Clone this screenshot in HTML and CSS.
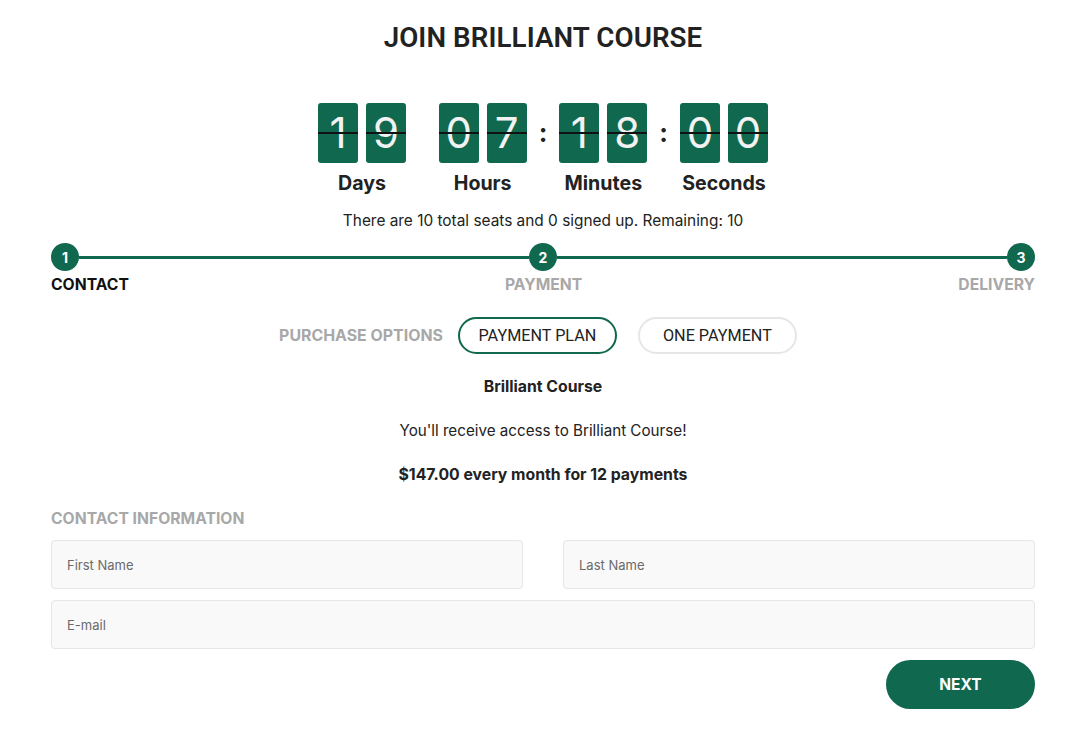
FILE: index.html
```html
<!DOCTYPE html>
<html>
<head>
<meta charset="utf-8">
<link rel="stylesheet" href="styles.css">
</head>
<body>
<div class="page">
  <h1 class="title">JOIN BRILLIANT COURSE</h1>

  <div class="countdown">
    <div class="unit">
      <div class="digits"><span class="card">1</span><span class="card">9</span></div>
      <div class="label">Days</div>
    </div>
    <div class="sep"></div>
    <div class="unit">
      <div class="digits"><span class="card">0</span><span class="card">7</span></div>
      <div class="label">Hours</div>
    </div>
    <div class="sep">:</div>
    <div class="unit">
      <div class="digits"><span class="card">1</span><span class="card">8</span></div>
      <div class="label">Minutes</div>
    </div>
    <div class="sep">:</div>
    <div class="unit">
      <div class="digits"><span class="card">0</span><span class="card">0</span></div>
      <div class="label">Seconds</div>
    </div>
  </div>

  <p class="seats">There are 10 total seats and 0 signed up. Remaining: 10</p>

  <div class="steps">
    <div class="track">
      <span class="dot">1</span>
      <span class="line"></span>
      <span class="dot">2</span>
      <span class="line"></span>
      <span class="dot">3</span>
    </div>
    <div class="step-labels">
      <span class="step active">CONTACT</span>
      <span class="step">PAYMENT</span>
      <span class="step">DELIVERY</span>
    </div>
  </div>

  <div class="options">
    <span class="options-label">PURCHASE OPTIONS</span>
    <button class="opt selected">PAYMENT PLAN</button>
    <button class="opt last">ONE PAYMENT</button>
  </div>

  <p class="product">Brilliant Course</p>
  <p class="desc">You'll receive access to Brilliant Course!</p>
  <p class="price">$147.00 every month for 12 payments</p>

  <div class="section-label">CONTACT INFORMATION</div>
  <div class="form">
    <div class="row">
      <input class="field" type="text" placeholder="First Name">
      <input class="field" type="text" placeholder="Last Name">
    </div>
    <input class="field wide" type="email" placeholder="E-mail">
  </div>
  <div class="actions">
    <button class="next">NEXT</button>
  </div>
</div>
</body>
</html>
```

FILE: styles.css
```css
* { box-sizing: border-box; }
html, body { margin: 0; padding: 0; background: #fff; }
body {
  font-family: Inter, "Noto Sans", sans-serif;
  color: #222;
}
.page {
  padding: 0 46px 0 51px;
}
.title {
  font-family: Roboto, "Liberation Sans", sans-serif;
  font-weight: 600;
  font-size: 27.7px;
  text-align: center;
  margin: 0;
  padding-top: 21px;
  line-height: 33px;
  color: #222;
  letter-spacing: 0.1px;
}
.countdown {
  display: flex;
  justify-content: center;
  margin-top: 49px;
}
.unit {
  display: flex;
  flex-direction: column;
  align-items: center;
  width: 88px;
}
.digits {
  display: flex;
  gap: 8px;
}
.card {
  position: relative;
  width: 40px;
  height: 60px;
  background: #10694e;
  border-radius: 3px;
  color: #f2f2f2;
  font-family: Inter, sans-serif;
  font-size: 42px;
  line-height: 60px;
  text-align: center;
  font-weight: 400;
}
.card::after {
  content: "";
  position: absolute;
  left: 0;
  right: 0;
  top: 29px;
  height: 1.5px;
  background: #111;
}
.label {
  font-size: 19.6px;
  font-weight: 700;
  margin-top: 9px;
  line-height: 22px;
  color: #222;
  white-space: nowrap;
}
.sep {
  width: 32.7px;
  text-align: center;
  font-size: 26px;
  font-weight: 700;
  line-height: 60px;
  color: #222;
}
.seats {
  text-align: center;
  font-size: 15.4px;
  margin: 17px 0 0;
  line-height: 20px;
}
.steps {
  margin-top: 12px;
}
.track {
  display: flex;
  align-items: center;
  height: 28px;
}
.dot {
  width: 28px;
  height: 28px;
  border-radius: 50%;
  background: #10694e;
  color: #fff;
  font-family: Inter, sans-serif;
  font-weight: 700;
  font-size: 14px;
  display: flex;
  align-items: center;
  justify-content: center;
  flex: none;
}
.line {
  flex: 1;
  height: 3px;
  background: #10694e;
}
.step-labels {
  display: flex;
  justify-content: space-between;
  margin-top: 4px;
}
.step {
  font-family: Inter, sans-serif;
  font-weight: 700;
  font-size: 15.7px;
  color: #a8a8a8;
  line-height: 20px;
}
.step.active { color: #111; }
.options {
  display: flex;
  justify-content: center;
  align-items: center;
  margin-top: 22px;
}
.options-label {
  font-family: Inter, sans-serif;
  font-weight: 700;
  font-size: 15.9px;
  color: #a8a8a8;
  margin-right: 15px;
}
.opt {
  width: 159px;
  height: 37px;
  border-radius: 19px;
  border: 2px solid #e6e6e6;
  background: #fff;
  font-family: Roboto, sans-serif;
  font-size: 16.2px;
  color: #222;
  padding: 0;
}
.opt.selected {
  border-color: #10694e;
  margin-right: 21px;
}
.opt.last { margin-right: 10px; }
.product, .desc, .price {
  text-align: center;
  font-size: 15.8px;
  margin: 0;
  line-height: 20px;
}
.product { font-weight: 700; margin-top: 23px; }
.desc { margin-top: 24px; font-size: 15.2px; }
.price { font-weight: 700; margin-top: 24px; }
.section-label {
  font-weight: 700;
  font-size: 15.7px;
  color: #a8a8a8;
  margin-top: 24px;
  line-height: 20px;
}
.form {
  display: flex;
  flex-direction: column;
  gap: 11px;
  margin-top: 11px;
}
.row {
  display: flex;
  gap: 40px;
}
.field {
  flex: 1;
  height: 49px;
  border: 1px solid #e6e6e6;
  border-radius: 4px;
  background: #f9f9f9;
  padding: 0 15px;
  font-family: Inter, sans-serif;
  font-size: 13px;
  color: #222;
  outline: none;
  min-width: 0;
}
.field::placeholder { color: #6a6a6a; }
.wide { flex: none; width: 100%; }
.actions {
  display: flex;
  justify-content: flex-end;
  margin-top: 11px;
}
.next {
  width: 149px;
  height: 49px;
  border: none;
  border-radius: 25px;
  background: #10694e;
  color: #fff;
  font-family: Inter, sans-serif;
  font-weight: 700;
  font-size: 15.5px;
  padding: 0;
}
```
